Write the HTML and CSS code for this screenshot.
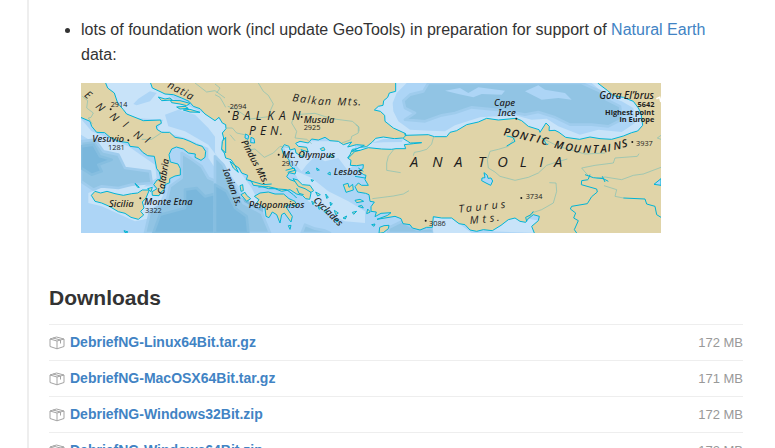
FILE: index.html
```html
<!DOCTYPE html>
<html lang="en">
<head>
<meta charset="utf-8">
<title>Release notes</title>
<link rel="stylesheet" href="styles.css">
</head>
<body>
<main class="release">
  <ul class="notes">
    <li>
      <p>lots of foundation work (incl update GeoTools) in preparation for support of <a href="#natural-earth">Natural Earth</a> data:</p>
      <svg class="map" viewBox="0 0 1740 450" role="img" aria-label="Natural Earth map of the eastern Mediterranean">
        <rect class="sea" width="1740" height="450"/>
        <!-- depth bands, west -->
        <g transform="translate(-18 -15)">
          <path class="shallow" d="M90 15H235L300 65L450 135V260L420 270L400 240V210L330 180L245 155L265 125L180 120L130 90ZM18 122L50 160L160 205L240 260L245 300L200 330L110 335L95 310L150 300L130 270L105 250L80 225L50 190L18 170ZM40 345L75 330L230 325L265 350L230 420L180 430L80 385L40 375Z"/>
          <path class="sea" d="M175 78L190 62L225 40L245 45L225 70L185 82ZM270 110L310 95L360 110L400 150L430 190V240L400 200L330 160L280 145Z"/>
          <path class="deep" d="M18 190L60 185L85 220L130 230L150 270L225 280L230 315L170 320L130 330L80 325L55 335L18 310ZM320 225L345 240L380 265L400 300L450 320V465H210L225 400L275 370L285 325L320 300Z"/>
          <path class="deeper" d="M18 205L55 200L75 235L110 245L70 260L80 280L50 290L18 270ZM330 335L365 330L390 355L430 345L560 380V465H235L255 410L330 390Z"/>
        </g>
        <!-- depth bands, Greece and the Aegean -->
        <g transform="translate(402 -15)">
          <path class="shallow" d="M0 110L35 150L20 210L60 260L110 330L140 390L110 380L60 310L25 260L0 225ZM205 200L280 190L420 190V235L415 260L400 280L370 240L330 250L300 235L275 260L260 280L215 230ZM235 275L290 300L340 340L400 370L450 400V435L390 430L330 400L280 370Z"/>
          <path class="deep" d="M0 235L25 260L50 310L85 375L140 405L165 465H0Z"/>
          <path class="deeper" d="M0 320L35 340L60 390L95 415L100 465H0Z"/>
          <path class="deep" d="M270 440L300 452L330 458L345 465H260Z"/>
        </g>
        <g transform="translate(822 -15)">
          <path class="deep" d="M100 450L140 430L185 455L230 450L240 465H100Z"/>
          <path class="shallow" d="M230 420L290 420L350 465H235ZM400 460L480 415L560 430L550 465Z"/>
        </g>
        <g transform="translate(402 -15)" class="land">
          <!-- Balkans and Anatolia -->
          <path d="M-195 10L-188 30L-162 42L-150 48L-125 50L-100 60L-78 70L-65 85L-45 92L-30 108L0 128L12 118L22 135L32 140L33 152L22 165L26 180L22 195L25 205L20 215L28 225L32 240L48 245L60 262L72 270L80 285L98 292L94 305L108 308L115 322L140 325L160 332L180 332L200 340L225 335L245 348L262 352L272 362L284 364L288 345L280 335L270 322L255 325L245 312L225 305L215 296L222 284L240 288L243 278L225 262L222 245L205 228L200 212L208 200L222 205L225 216L240 212L243 225L262 236L268 225L258 215L280 222L275 208L250 205L242 196L255 190L280 195L290 183L310 186L330 178L345 188L370 190L385 200L410 192L398 207L424 200L448 202L428 212L412 214L405 230L398 240L408 247L406 262L425 263L445 260L444 272L430 278L446 290L453 292L450 305L460 322L440 322L430 315L420 326L428 342L452 346L462 350L465 370L478 372L468 386L468 400L484 402L480 416L498 406L528 404L518 412L486 424L522 418L540 415L558 422L564 437L585 440L592 450L615 456L635 448L652 448L655 416L680 420L710 420L732 437L750 440L765 456L785 460L805 455L832 458L858 442L880 425L900 420L915 430L932 433L940 422L955 410L973 415L970 428L950 445L962 475H1400V0H-195Z"/>
          <!-- Peloponnese -->
          <path d="M118 355L135 345L160 342L180 348L206 348L222 362L240 370L246 384L225 380L212 385L232 415L228 432L208 405L200 410L195 435L185 410L172 402L162 419L153 415L150 390L125 375L132 365Z"/>
          <!-- Euboea and the islands -->
          <path d="M234 302L248 306L262 320L285 322L296 338L288 343L270 332L250 325ZM385 320L399 316L402 328L413 319L415 336L393 343ZM45 250L60 262L70 283L55 270ZM75 323L83 320L85 338L78 340ZM78 350L90 343L95 352L107 362L95 370ZM302 342L316 350L308 354ZM332 348L340 358L335 361ZM345 373L352 377L347 383ZM358 397L370 405L362 410ZM330 395L338 400L330 404ZM290 370L298 374L294 380ZM310 385L318 390L312 394ZM360 423L372 427L365 432ZM288 305L296 307L291 311ZM272 285L280 280L284 286ZM305 270L313 276L306 277ZM420 367L435 364L446 370L425 374ZM384 420L395 414L391 423ZM412 403L425 400L416 409ZM220 443L228 442L225 454ZM338 287L345 282L346 291ZM316 212L326 208L330 216L320 218ZM340 235L352 229L356 238ZM430 385L440 382L445 390ZM458 393L466 402L455 407ZM470 440L480 438L477 445ZM494 448L507 443L522 442L520 452L505 464L492 466Z"/>
        </g>
        <g transform="translate(-18 -15)" class="land">
          <!-- Italy and Sicily -->
          <path d="M10 5H88L98 30L118 45L128 75L145 95L155 108L180 118L205 128L257 126L259 136L244 144L246 154L260 163L284 163L300 178L325 182L345 190L365 200L382 205L392 220L390 238L378 247L360 238L361 228L340 225L325 213L304 207L290 213L282 230L286 252L309 258L316 272L316 291L300 294L284 302L284 314L270 320L268 335L260 340L252 353L232 352L231 341L246 332L236 320L246 306L258 303L253 282L245 272L238 235L218 233L203 223L190 208L165 205L160 194L132 190L105 178L89 164L65 163L50 145L45 130L10 115Z"/>
          <path d="M49 352L60 340L77 345L96 340L120 347L145 352L170 347L188 345L202 336L223 336L213 360L202 372L207 390L197 400L206 411L190 424L168 418L150 406L130 401L103 385L80 375L60 370Z"/>
          <path d="M180 316L193 328L188 328ZM147 458L159 462L150 464ZM218 332L232 328L228 341ZM250 57L270 63L285 60L292 66L260 68ZM286 67L315 68L345 76L335 83L315 78L290 74ZM305 87L330 85L340 91L315 93ZM325 96L345 94L375 103L345 102ZM442 190L452 178V225L440 213Z"/>
        </g>
        <!-- Black Sea, Marmara and lakes -->
        <g transform="translate(822 -15)">
          <path class="water shallow" d="M122 5V40L103 45L98 58L86 68L84 82L70 85L58 96L76 100L89 112L90 130L115 150L150 166L150 172L220 170L238 176L275 176L285 163L305 158L335 140L370 132L395 121L430 126L483 121L500 128L520 145L552 155L555 163L573 135L583 145L582 158L600 157L612 163L632 178L674 184L705 177L735 182L770 184L805 174L830 164L848 159L863 142L858 105L850 90L835 70L805 58L775 53L758 38L728 15V5Z"/>
          <path class="sea" d="M155 15L125 45L113 75L115 100L130 130L165 155L225 158L270 160L300 142L375 118L480 112L530 125L575 122L610 145L675 170L730 155L800 162L840 135L835 90L800 70L757 55L710 15Z"/>
          <path class="deep" d="M220 15L205 40L165 50L145 68L150 90L180 105L150 125L210 130L260 112L300 105L350 88L450 98L510 110L550 102L600 118L645 140L710 140L760 145L800 125L795 85L755 65L735 40L680 15Z"/>
          <path class="sea" d="M270 38L315 30L340 45L370 28L450 38L440 50L380 48L355 58L310 48ZM510 40L550 22L570 35L630 45L650 65L610 60L560 65Z"/>
          <path class="water shallow" d="M-10 220L15 208L35 206L52 192L62 181L85 177L118 182L142 180L158 190L166 195L200 194L175 197L148 200L152 212L123 212L110 214L80 213L40 209L15 217Z"/>
          <path class="sea" d="M50 195L85 183L145 184L140 192L85 193Z"/>
          <path class="coast" d="M150 165L153 172L145 180M-20 240L0 220L15 217"/>
          <path class="water sea" d="M387 284L397 292L399 301L408 300L413 309L407 322L393 315L380 308L381 300L390 299Z"/>
          <path class="water sea" d="M897 319L918 302V322Z"/>
        </g>
        <g transform="translate(402 -15)">
          <path class="water sea" d="M91 168L101 173L99 184L90 180ZM108 178L117 182L119 195L107 194Z"/>
          <path class="coast" d="M130 327L160 326L190 333L215 335L235 350L245 360M245 330L252 346L266 350M212 277L238 270L240 277L218 283M445 280L430 270M420 295L450 300M100 307L145 320L170 318"/>
        </g>
        <!-- rivers and borders -->
        <g class="river" transform="translate(402 -15)">
          <path d="M0 50L15 58L25 75L32 88M0 18L15 30L5 45M130 15L145 40L160 52L175 78L165 100L170 115L105 123L60 92L38 85M238 110L300 106L350 122L412 130L430 145L430 165L410 175L408 185L380 195M238 110L230 135L245 160L240 180L275 184L290 197M35 150L52 150L65 165L88 170M92 185L105 215L120 213L148 238L175 225L195 205L222 208M60 188L45 170M422 140L432 147L432 160"/>
        </g>
        <g class="river" transform="translate(-18 -15)">
          <path d="M22 55L38 68L35 90L55 105L48 118L40 120L52 138M200 184L230 184L258 165M360 15L395 42L420 38L450 60"/>
        </g>
        <g class="river" transform="translate(822 -15)">
          <path d="M236 176L230 198L215 214L195 220L178 223L175 233M115 216L100 235L95 255L95 277L137 284M52 362L115 354L145 348L162 338M480 178L460 205L430 214L405 220L397 245L400 270L420 282L435 295L480 307L520 298L550 285L575 262L605 252L637 243M583 314L603 315L605 340L595 375L560 395L530 405L515 425M852 227L847 235L780 240L775 255L720 262L680 270L690 282L700 292M725 300L750 297L800 305L835 292L865 288L918 268M747 323L785 335L780 355L805 360M918 172L907 180L918 184M560 180L610 205L690 228L750 225"/>
          <path class="coast" d="M690 290L715 299L745 302L760 310M705 290L700 303M742 295L750 312M700 305L680 308L679 320L725 333L727 342L710 356L697 377L650 385L646 393L662 405L656 420L670 428L658 455L665 465M805 360L870 363L875 378L900 385L905 410L918 418M535 400L528 410L512 418L515 430M455 174L474 178L480 190L455 204M563 180L575 200L580 198"/>
        </g>
        <!-- labels, west -->
        <g transform="translate(-18 -15)">
          <text class="range" x="26 60 102 142 173 208" y="54 88 118 145 174 192" rotate="38 42 42 38 35 35">ENNINI</text>
          <text class="range" x="276 294 313 324 333" y="28 38 48 53 59" rotate="25">natia</text>
          <text class="height" x="107" y="86">2914</text>
          <text class="place" x="52" y="191">Vesuvio</text>
          <text class="height" x="99" y="215">1281</text>
          <text class="place" x="102" y="388">Sicilia</text>
          <text class="place" x="208" y="381">Monte Etna</text>
          <text class="height" x="210" y="405">3322</text>
          <text class="place" transform="translate(267 350) rotate(-82)">Calabria</text>
          <circle cx="107" cy="94" r="3"/><circle cx="160" cy="187" r="3"/><circle cx="196" cy="361" r="3"/>
        </g>
        <!-- labels, Balkans and Greece -->
        <g transform="translate(402 -15)">
          <text class="height" x="44" y="92">2694</text>
          <text class="range big" x="50 86 122 157 192 231" y="125">BALKAN</text>
          <text class="range big" x="102 135 165 194" y="170">PEN.</text>
          <text class="range" x="231 254 276 288 308 329 367 398 414 430" y="69 73 76 78 80 80 82 82 82 82" rotate="8 7 6 5 4 2 2 1 1 1">BalkanMts.</text>
          <text class="place" x="266" y="134">Musala</text>
          <text class="height" x="266" y="155">2925</text>
          <text class="place" x="201" y="239">Mt. Olympus</text>
          <text class="height" x="200" y="263">2917</text>
          <text class="place" x="356" y="292">Lesbos</text>
          <text class="place" x="101" y="391">Peloponnisos</text>
          <text class="place" transform="translate(78 192) rotate(62)">Pindus Mts.</text>
          <text class="place" transform="translate(23 275) rotate(70)">Ionian Is.</text>
          <text class="place" transform="translate(294 368) rotate(45)">Cyclades</text>
          <circle cx="42" cy="101" r="3"/><circle cx="260" cy="117" r="3"/><circle cx="191" cy="230" r="3"/>
        </g>
        <!-- labels, Anatolia and the Caucasus -->
        <g transform="translate(822 -15)">
          <text class="range huge" x="165 232 298 369 427 494 553 597" y="266">ANATOLIA</text>
          <text class="place" x="417" y="83">Cape</text>
          <text class="place" x="429" y="115">Ince</text>
          <text class="range pontic" x="445 467 493 519 543 557 596 629 655 684 713 737 759 777 803" y="172 175 182 188 193 197 209 217 222 224 225 224 221 216 209" rotate="10 14 14 14 14 14 12 10 7 3 0 -5 -8 -10 -15">PONTICMOUNTAINS</text>
          <text class="range" x="312 334 362 388 411 438" y="404 402 399 396 393 391" rotate="-6">Taurus</text>
          <text class="range" x="345 383 405 426" y="438 434 431 429" rotate="-5">Mts.</text>
          <text class="height" x="222" y="443">3086</text>
          <text class="height" x="512" y="363">3734</text>
          <text class="height" x="843" y="204">3937</text>
          <text class="place summit" x="897" y="62" text-anchor="end">Gora El’brus</text>
          <text class="height strong" x="898" y="87" text-anchor="end">5642</text>
          <text class="height strong" x="898" y="111" text-anchor="end">Highest point</text>
          <text class="height strong" x="898" y="132" text-anchor="end">in Europe</text>
          <circle cx="212" cy="428" r="3"/><circle cx="499" cy="360" r="3"/><circle cx="832" cy="192" r="3"/><circle cx="484" cy="122" r="3"/>
          <path class="snow" d="M904 62L914 58L918 72"/>
        </g>
      </svg>
    </li>
  </ul>

  <svg class="symbols" aria-hidden="true">
    <symbol id="package" viewBox="0 0 16 14">
      <path d="M1 3L7.500 1L15 3V10.500L8 12.800L1 10.500ZM1 3L8 5L15 3M8 5V12.800M4 2L11.500 4V7.500"/>
    </symbol>
  </svg>
  <h2>Downloads</h2>
  <ul class="downloads">
    <li><a href="#linux64"><svg class="icon" aria-hidden="true"><use href="#package"/></svg>DebriefNG-Linux64Bit.tar.gz</a><span class="size">172 MB</span></li>
    <li><a href="#macosx64"><svg class="icon" aria-hidden="true"><use href="#package"/></svg>DebriefNG-MacOSX64Bit.tar.gz</a><span class="size">171 MB</span></li>
    <li><a href="#windows32"><svg class="icon" aria-hidden="true"><use href="#package"/></svg>DebriefNG-Windows32Bit.zip</a><span class="size">172 MB</span></li>
    <li><a href="#windows64"><svg class="icon" aria-hidden="true"><use href="#package"/></svg>DebriefNG-Windows64Bit.zip</a><span class="size">172 MB</span></li>
  </ul>
</main>
</body>
</html>
```
FILE: styles.css
```css
* { box-sizing: border-box; }

body {
  margin: 0;
  background: #fff;
  color: #333;
  font: 16px/25px "Liberation Sans", Arial, sans-serif;
}

a { color: #4183c4; text-decoration: none; }
a:hover { text-decoration: underline; }

.release {
  margin: 0 32px 0 27px;
  padding: 17px 0 0 20px;
  border-left: 2px solid #eee;
}

.notes { margin: 0; padding-left: 32px; }
.notes p { margin: 0 0 16px; }

.map { display: block; width: 580px; max-width: 100%; height: auto; }
.sea { fill: #add5f6; }
.shallow { fill: #c8e3f9; }
.deep { fill: #91c4e4; stroke: #9fcced; stroke-width: 8; stroke-linejoin: round; }
.deeper { fill: #7ab7dc; stroke: #86bee0; stroke-width: 8; stroke-linejoin: round; }
.land { fill: #e0d4a8; stroke: #00b4d6; stroke-width: 3; stroke-linejoin: round; }
.water { stroke: #00b4d6; stroke-width: 3; }
.river { fill: none; stroke: #80bfb5; stroke-width: 2; }
.coast { fill: none; stroke: #00b4d6; stroke-width: 3; }
.snow { fill: none; stroke: #fff; stroke-width: 5; }

.map text { fill: #1c1c1c; font-family: "Open Sans", "Noto Sans", sans-serif; }
.map circle { fill: #1c1c1c; }
.map .place { font-family: "Noto Sans", "Open Sans", sans-serif; font-size: 28px; font-style: italic; font-weight: 500; }
.map .summit { font-size: 30px; }
.map .height { font-size: 22px; font-weight: 500; }
.map .strong { font-weight: 700; }
.map .range { font-size: 32px; font-style: italic; }
.map .pontic { font-weight: 600; }
.map .big { font-size: 36px; }
.map .huge { font-size: 44px; }

h2 { margin: 53px 0 14px; font-size: 21px; line-height: 24px; }

.symbols { display: none; }

.downloads { margin: 0; padding: 0; list-style: none; }
.downloads li {
  display: flex;
  align-items: center;
  justify-content: space-between;
  height: 36px;
  border-top: 1px solid #eee;
  font-size: 14px;
}
.downloads a { display: flex; align-items: center; gap: 5px; font-weight: bold; }
.icon { width: 16px; height: 14px; fill: none; stroke: #a4a4a4; stroke-width: 1; }
.size { color: #999; font-size: 13px; }
```
